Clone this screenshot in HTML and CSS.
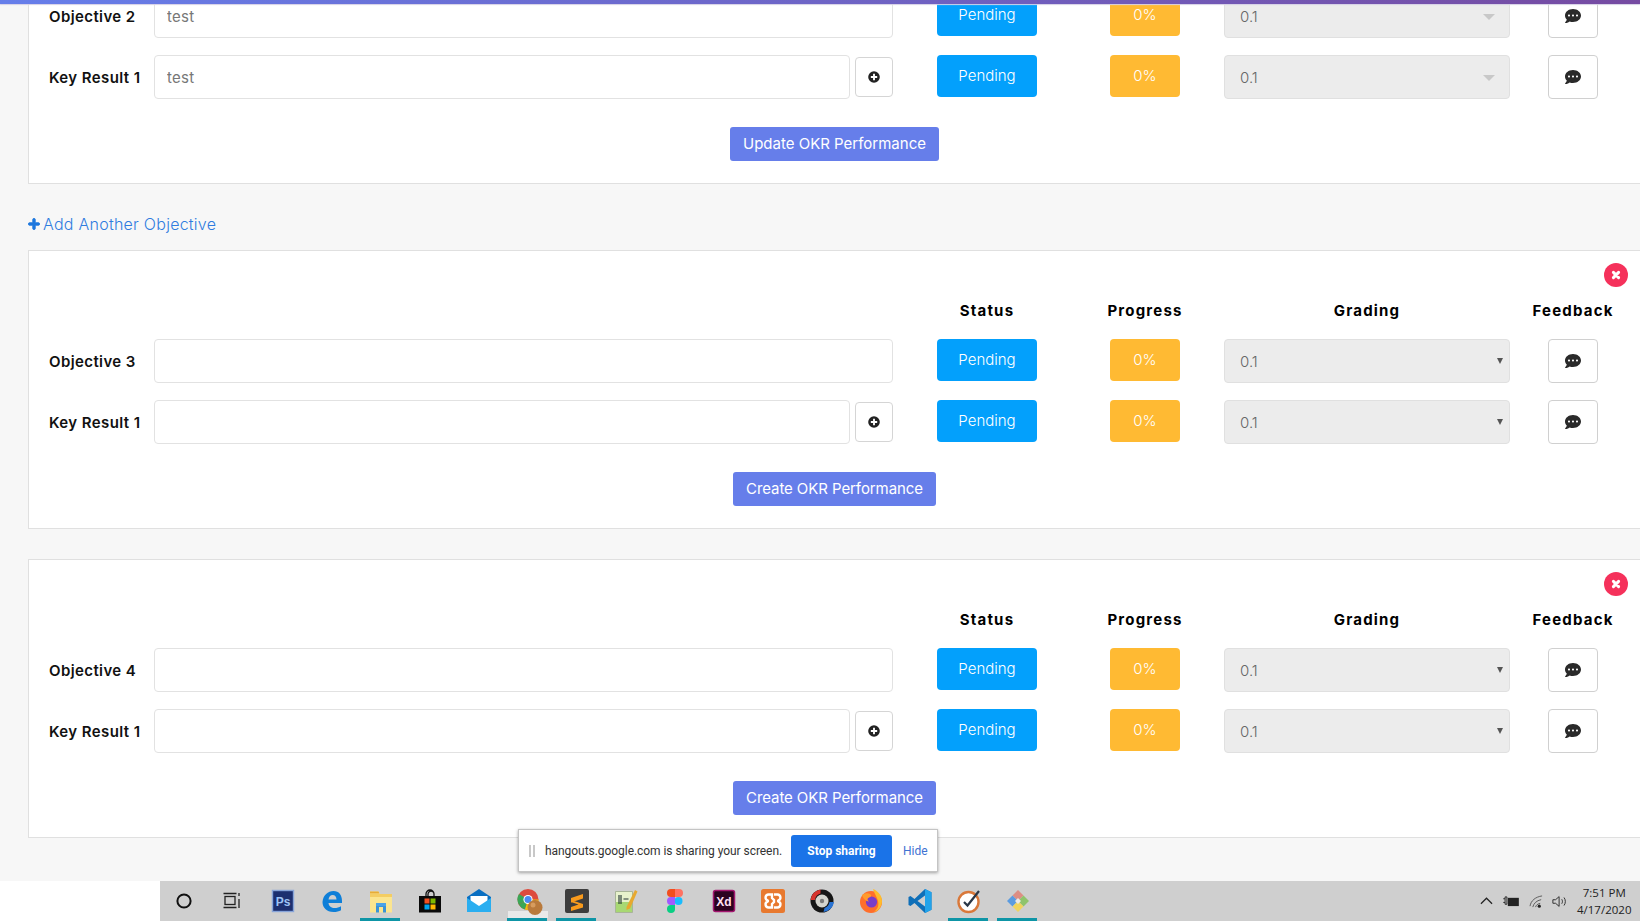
FILE: index.html
```html
<!DOCTYPE html>
<html lang="en">
<head>
<meta charset="utf-8">
<title>OKR Performance</title>
<link rel="stylesheet" href="styles.css">
</head>
<body>
<svg class="sprites" width="0" height="0" aria-hidden="true">
  <symbol id="i-dots" viewBox="0 0 512 512"><path d="M256 32C114.6 32 0 125.1 0 240c0 49.6 21.4 95 57 130.7C44.5 421.1 2.7 466 2.2 466.5c-2.2 2.3-2.8 5.7-1.5 8.7S4.8 480 8 480c66.3 0 116-31.8 140.6-51.4 32.7 12.3 69 19.4 107.4 19.4 141.4 0 256-93.1 256-208S397.4 32 256 32zM128 272c-17.7 0-32-14.3-32-32s14.3-32 32-32 32 14.3 32 32-14.3 32-32 32zm128 0c-17.7 0-32-14.3-32-32s14.3-32 32-32 32 14.3 32 32-14.3 32-32 32zm128 0c-17.7 0-32-14.3-32-32s14.3-32 32-32 32 14.3 32 32-14.3 32-32 32z"/></symbol>
  <symbol id="i-plus-circle" viewBox="0 0 512 512"><path fill-rule="evenodd" d="M256 8a248 248 0 1 0 0 496 248 248 0 0 0 0-496zM392 284c0 7-5 12-12 12h-84v84c0 7-5 12-12 12h-56c-7 0-12-5-12-12v-84h-84c-7 0-12-5-12-12v-56c0-7 5-12 12-12h84v-84c0-7 5-12 12-12h56c7 0 12 5 12 12v84h84c7 0 12 5 12 12z"/></symbol>
  <symbol id="i-plus" viewBox="-20 0 488 512"><path d="M416 208H272V64c0-18-14-32-32-32h-32c-18 0-32 14-32 32v144H32c-18 0-32 14-32 32v32c0 18 14 32 32 32h144v144c0 18 14 32 32 32h32c18 0 32-14 32-32V304h144c18 0 32-14 32-32v-32c0-18-14-32-32-32z"/></symbol>
  <symbol id="i-times" viewBox="0 0 24 24"><path d="M9.400 9.400l5.200 5.200M14.600 9.400l-5.200 5.200" stroke="#fff" stroke-width="3" stroke-linecap="round" fill="none"/></symbol>
</svg>

<div class="screen">
  <div class="topbar"></div>

  <main class="page">
    <section class="card card-first">
      <div class="row">
        <label class="row-label">Objective 2</label>
        <div class="field"><input class="text-input" type="text" value="test"></div>
        <div class="cell"><button class="pill pill-status">Pending</button></div>
        <div class="cell"><button class="pill pill-progress">0%</button></div>
        <div class="cell"><div class="grade grade-locked">0.1</div></div>
        <div class="cell"><button class="square"><svg class="icon-dots"><use href="#i-dots"/></svg></button></div>
      </div>
      <div class="row">
        <label class="row-label">Key Result 1</label>
        <div class="field"><input class="text-input" type="text" value="test"><button class="add"><svg class="icon-add"><use href="#i-plus-circle"/></svg></button></div>
        <div class="cell"><button class="pill pill-status">Pending</button></div>
        <div class="cell"><button class="pill pill-progress">0%</button></div>
        <div class="cell"><div class="grade grade-locked">0.1</div></div>
        <div class="cell"><button class="square"><svg class="icon-dots"><use href="#i-dots"/></svg></button></div>
      </div>
      <div class="actions"><button class="submit">Update OKR Performance</button></div>
    </section>

    <a class="add-link"><svg class="icon-plus"><use href="#i-plus"/></svg>Add Another Objective</a>

    <section class="card">
      <button class="remove"><svg class="icon-times"><use href="#i-times"/></svg></button>
      <div class="row row-head">
        <span></span><span></span>
        <div class="cell">Status</div><div class="cell">Progress</div><div class="cell">Grading</div><div class="cell">Feedback</div>
      </div>
      <div class="row">
        <label class="row-label">Objective 3</label>
        <div class="field"><input class="text-input" type="text"></div>
        <div class="cell"><button class="pill pill-status">Pending</button></div>
        <div class="cell"><button class="pill pill-progress">0%</button></div>
        <div class="cell"><div class="grade">0.1</div></div>
        <div class="cell"><button class="square"><svg class="icon-dots"><use href="#i-dots"/></svg></button></div>
      </div>
      <div class="row">
        <label class="row-label">Key Result 1</label>
        <div class="field"><input class="text-input" type="text"><button class="add"><svg class="icon-add"><use href="#i-plus-circle"/></svg></button></div>
        <div class="cell"><button class="pill pill-status">Pending</button></div>
        <div class="cell"><button class="pill pill-progress">0%</button></div>
        <div class="cell"><div class="grade">0.1</div></div>
        <div class="cell"><button class="square"><svg class="icon-dots"><use href="#i-dots"/></svg></button></div>
      </div>
      <div class="actions"><button class="submit submit-create">Create OKR Performance</button></div>
    </section>

    <section class="card">
      <button class="remove"><svg class="icon-times"><use href="#i-times"/></svg></button>
      <div class="row row-head">
        <span></span><span></span>
        <div class="cell">Status</div><div class="cell">Progress</div><div class="cell">Grading</div><div class="cell">Feedback</div>
      </div>
      <div class="row">
        <label class="row-label">Objective 4</label>
        <div class="field"><input class="text-input" type="text"></div>
        <div class="cell"><button class="pill pill-status">Pending</button></div>
        <div class="cell"><button class="pill pill-progress">0%</button></div>
        <div class="cell"><div class="grade">0.1</div></div>
        <div class="cell"><button class="square"><svg class="icon-dots"><use href="#i-dots"/></svg></button></div>
      </div>
      <div class="row">
        <label class="row-label">Key Result 1</label>
        <div class="field"><input class="text-input" type="text"><button class="add"><svg class="icon-add"><use href="#i-plus-circle"/></svg></button></div>
        <div class="cell"><button class="pill pill-status">Pending</button></div>
        <div class="cell"><button class="pill pill-progress">0%</button></div>
        <div class="cell"><div class="grade">0.1</div></div>
        <div class="cell"><button class="square"><svg class="icon-dots"><use href="#i-dots"/></svg></button></div>
      </div>
      <div class="actions"><button class="submit submit-create">Create OKR Performance</button></div>
    </section>
  </main>

  <div class="share-bar">
    <span class="share-grip"></span>
    <span class="share-text">hangouts.google.com is sharing your screen.</span>
    <button class="share-stop">Stop sharing</button>
    <a class="share-hide">Hide</a>
  </div>

  <footer class="taskbar">
    <div class="search-box"></div>
    <div class="tb-item tb-cortana"><svg viewBox="0 0 24 24"><circle cx="12" cy="12" r="6.600" fill="none" stroke="#111" stroke-width="2"/></svg></div>
    <div class="tb-item tb-view"><svg viewBox="0 0 24 24"><g fill="none" stroke="#222" stroke-width="1.300"><rect x="4" y="7.500" width="10" height="8"/><path d="M2.500 4.500h13M2.500 18.500h13M18 4v3M18 10v9"/></g></svg></div>
    <div class="tb-item"><svg viewBox="0 0 24 24"><rect x="1.500" y="1.500" width="21" height="21" fill="#1c2f70" stroke="#87a4d9" stroke-width="1.400"/><text x="12" y="16.500" class="svg-label svg-ps">Ps</text></svg></div>
    <div class="tb-item"><svg viewBox="0 0 24 24"><path d="M2.500 13C3 6 8 2 13.500 2c5.500 0 8.500 4 8.500 10v2H8.500c.3 3.500 3 5 6 5 2.500 0 4.700-.7 6.500-1.800v4c-2 1-4.500 1.800-7.500 1.800-7 0-11-4.500-11-10zM8.500 10.500h8c0-2.500-1.500-4.500-3.800-4.500-2.500 0-3.800 2-4.200 4.500z" fill="#0f7fd8"/></svg></div>
    <div class="tb-item tb-active"><svg viewBox="0 0 24 24"><path d="M1 2.500h8.500l2 3H23v18H1z" fill="#fbe58f"/><path d="M1 2.500h8.500l1 2H1z" fill="#e7ac36"/><path d="M1 5h22v3H1z" fill="#f4cd62"/><path d="M7 14h10v9.500h-3V18h-4v5.500H7z" fill="#3b93d8"/><path d="M7 14h10v3H7z" fill="#4aa3e8"/></svg></div>
    <div class="tb-item"><svg viewBox="0 0 24 24"><path d="M8 8V5a4 4 0 0 1 8 0v3M10 8V5a3 3 0 0 1 5-2" fill="none" stroke="#111" stroke-width="1.300"/><rect x="1" y="7" width="22" height="16.500" fill="#0a0a0a"/><rect x="6.500" y="9.500" width="5" height="5" fill="#f25022"/><rect x="12.500" y="9.500" width="5" height="5" fill="#7fba00"/><rect x="6.500" y="15.500" width="5" height="5" fill="#00a4ef"/><rect x="12.500" y="15.500" width="5" height="5" fill="#ffb900"/></svg></div>
    <div class="tb-item"><svg viewBox="0 0 24 24"><path d="M0 8L12 0l12 8v15H0z" fill="#0a6fc2"/><path d="M3.500 7h17v6.500L12 19l-8.500-5.500z" fill="#fff"/><path d="M0 23V9l12 8 12-8v14z" fill="#2aaef0"/></svg></div>
    <div class="tb-item tb-chrome"><svg viewBox="-1 0 24 24"><circle cx="11" cy="10.500" r="10.500" fill="#dd4b3e"/><path d="M11 10.500L1.800 15.500A10.500 10.500 0 0 1 2 5z" fill="#3aa757"/><path d="M11 10.500l-3 10.100A10.500 10.500 0 0 1 1.800 15.500z" fill="#3aa757"/><path d="M11 10.500h10.500a10.500 10.500 0 0 1-13.500 10.100z" fill="#f4c20d"/><circle cx="11" cy="10.500" r="4.600" fill="#fff"/><circle cx="11" cy="10.500" r="3.500" fill="#4a8af4"/><circle cx="18" cy="18.500" r="7.500" fill="#b97a3c"/><circle cx="16" cy="16" r="2.500" fill="#d79c5e"/></svg></div>
    <div class="tb-item tb-active"><svg viewBox="0 0 24 24"><rect width="24" height="24" rx="2" fill="#3d3d3d"/><path d="M6 9l12-4v4.500L6 13.500zM6 11l12 4v3.500L6 22v-4l7.500-2.500L6 13z" fill="#f89a1c"/></svg></div>
    <div class="tb-item"><svg viewBox="0 0 24 24"><path d="M1.500 2.500h17v21h-17z" fill="#e7f2cc" stroke="#9aa98a" stroke-width=".8"/><path d="M2 13h16v10H2z" fill="#a8d873"/><path d="M5 6v9M7 6v9M9.500 10h5" stroke="#233" stroke-width="1.100"/><path d="M12.500 18L21 1l2.500 1.500L16 19.500 12.500 21z" fill="#e7a92f"/></svg></div>
    <div class="tb-item"><svg viewBox="0 0 24 24"><circle cx="15.500" cy="12" r="4" fill="#19bcfe"/><path d="M8 24a4 4 0 0 1 0-8h4v4a4 4 0 0 1-4 4" fill="#09cf83"/><path d="M8 16a4 4 0 0 1 0-8h4v8z" fill="#a259ff"/><path d="M12 0h4a4 4 0 0 1 0 8h-4z" fill="#ff7262"/><path d="M8 0h4v8H8a4 4 0 0 1 0-8" fill="#f24e1e"/></svg></div>
    <div class="tb-item"><svg viewBox="0 0 24 24"><rect x="1.500" y="1.500" width="21" height="21" rx="2" fill="#2b0320" stroke="#a3176f" stroke-width="1.500"/><text x="12" y="16.500" class="svg-label svg-xd">Xd</text></svg></div>
    <div class="tb-item"><svg viewBox="0 0 24 24"><rect width="24" height="24" rx="2.500" fill="#e8792f"/><path d="M11 5.500H7.500a3 3 0 0 0-1 5.800c.6.300.6 1.100 0 1.400a3 3 0 0 0 1 5.800H11V15l2-2v-2l-2-2zM13 5.500h3.500a3 3 0 0 1 1 5.800c-.6.300-.6 1.100 0 1.400a3 3 0 0 1-1 5.800H13" fill="none" stroke="#fff" stroke-width="2.400"/></svg></div>
    <div class="tb-item"><svg viewBox="0 0 24 24"><circle cx="12" cy="12" r="11.500" fill="#161616"/><path d="M.5 11a11.500 11.500 0 0 1 10-10.500v4A7.500 7.500 0 0 0 5 11z" fill="#d8332c"/><path d="M24 13a11.500 11.500 0 0 1-10.500 10l1-4a7.500 7.500 0 0 0 5-6z" fill="#2a74d4"/><circle cx="12" cy="12" r="6.500" fill="#d4d4ce"/><circle cx="12" cy="12" r="2.200" fill="#7a7a7a"/></svg></div>
    <div class="tb-item"><svg viewBox="0 0 24 24"><circle cx="12" cy="13" r="11" fill="#ff6f2c"/><path d="M14 0c5 2 9 6.500 9 12 0 6-4 10-8 11 4-3 5-7 4-11-1-4-4-8-5-12z" fill="#ffbc2c"/><circle cx="12.500" cy="13" r="5.600" fill="#7a3ec8"/><path d="M3 6c3-2 6-2 8-1 2 1 1 3-1 3.500-2 .5-2 2.500 0 4-3 0-6-3-7-6.500z" fill="#ff9b2d"/></svg></div>
    <div class="tb-item"><svg viewBox="0 0 24 24"><path d="M17 0l6.500 3.200v17.600L17 24 6.500 14 2.500 17 .5 16V8l2-1 4 3z" fill="#0f6fb8"/><path d="M17 0l6.500 3.200v17.600L17 24z" fill="#22a3ea"/><path d="M17 6.500L9.500 12l7.500 5.500z" fill="#cfcfcf"/></svg></div>
    <div class="tb-item tb-active"><svg viewBox="0 0 24 24"><circle cx="11.500" cy="13" r="10" fill="#fff" stroke="#d9783a" stroke-width="2.400"/><path d="M7 13l3.500 3.500L22 2" fill="none" stroke="#2a3646" stroke-width="2.200"/></svg></div>
    <div class="tb-item tb-active"><svg viewBox="0 0 24 24"><path d="M12 1l5.500 5.500L12 12 6.500 6.500z" fill="#dd8e84"/><path d="M17.500 6.500L23 12l-5.500 5.500L12 12z" fill="#8fc46c"/><path d="M6.500 6.500L12 12l-5.500 5.500L1 12z" fill="#5b9be0"/><path d="M12 12l5.500 5.500L12 23l-5.500-5.500z" fill="#f0d45e"/><path d="M12 9L15 12 12 15 9 12z" fill="#e9e9e9"/></svg></div>

    <div class="tray">
      <svg class="tray-chevron" viewBox="0 0 14 8"><path d="M1 7l6-6 6 6" fill="none" stroke="#222" stroke-width="1.300"/></svg>
      <svg class="tray-battery" viewBox="0 0 18 12"><path d="M0 3h2M0 7h2M2 1v8h2V1z" stroke="#222" fill="none"/><rect x="5" y="2" width="12" height="9" fill="#222"/></svg>
      <svg class="tray-wifi" viewBox="0 0 16 14"><g fill="none" stroke="#555" stroke-width="1"><path d="M1 12C2 6 7 2 14 1M4 13c1-4 4-7 9-8M7 13c.6-2 2-3.500 5-4"/></g><circle cx="11" cy="12" r="1.700" fill="#222"/></svg>
      <svg class="tray-volume" viewBox="0 0 18 14"><g fill="none" stroke="#222" stroke-width="1"><path d="M1 5v4h3l4 3.500v-11L4 5zM11 4.500c1 1.500 1 3.500 0 5M13.500 2.500c2 2.500 2 6.500 0 9"/></g></svg>
      <div class="clock"><span>7:51 PM</span><span>4/17/2020</span></div>
    </div>
  </footer>
</div>
</body>
</html>
```

FILE: styles.css
```css
* { box-sizing: border-box; }

html, body {
  margin: 0;
  height: 100%;
  overflow: hidden;
}

body {
  font-family: Inter, "Liberation Sans", sans-serif;
  color: #111;
  background: #f7f7f7;
}

.sprites { display: block; height: 0; }

.screen {
  position: relative;
  display: flex;
  flex-direction: column;
  height: 921px;
  overflow: hidden;
}

.topbar {
  flex: none;
  position: relative;
  z-index: 2;
  height: 4px;
  background: linear-gradient(90deg, #667eea, #764ba2);
  box-shadow: 0 1px 1px #d5d0e6;
}

.page {
  flex: 1;
  min-height: 0;
  overflow: hidden;
  padding-left: 28px;
}

.card {
  position: relative;
  width: 1613px;
  margin-bottom: 30px;
  padding: 50px 0 22px 20px;
  background: #fff;
  border: 1px solid #e0e0e0;
}

.card-first {
  margin-top: -40px;
  margin-bottom: 0;
  padding-top: 30px;
  border-top: 0;
}

.row {
  display: grid;
  grid-template-columns: 105px 739px 188px 128px 316px 96px;
  margin-bottom: 17px;
}

.row-head {
  height: 20px;
  margin-bottom: 18px;
  font-size: 15px;
  font-weight: 700;
  letter-spacing: 1.2px;
  line-height: 20px;
  color: #000;
}

.cell {
  display: flex;
  justify-content: center;
  align-items: flex-start;
}

.row-label {
  align-self: center;
  font-size: 15px;
  font-weight: 600;
  letter-spacing: .4px;
  color: #111;
  white-space: nowrap;
}

.field {
  display: flex;
  align-items: center;
  gap: 5px;
}

.text-input {
  flex: 1;
  min-width: 0;
  height: 44px;
  padding: 0 12px;
  font: 400 15px Inter, "Liberation Sans", sans-serif;
  letter-spacing: .3px;
  color: #777;
  background: #fff;
  border: 1px solid #e2e2e2;
  border-radius: 4px;
}

.add {
  flex: none;
  display: flex;
  align-items: center;
  justify-content: center;
  width: 38px;
  height: 40px;
  padding: 0;
  background: #fff;
  border: 1px solid #d5d5d5;
  border-radius: 4px;
}

.icon-add { width: 12px; height: 12px; fill: #222; }

.pill {
  height: 42px;
  padding: 0 0 2px;
  font: 300 15px Inter, "Liberation Sans", sans-serif;
  color: #fff;
  border: 0;
  border-radius: 4px;
}

.pill-status { width: 100px; background: #03a0fc; }
.pill-progress { width: 70px; background: #ffba33; }

.grade {
  position: relative;
  width: 286px;
  height: 44px;
  padding-left: 15px;
  font-size: 15px;
  font-weight: 300;
  line-height: 44px;
  color: #666;
  background: #ececec;
  border: 1px solid #e0e0e0;
  border-radius: 4px;
}

.grade::after {
  content: "";
  position: absolute;
  right: 6px;
  top: 18px;
  border: 3.5px solid transparent;
  border-top: 6px solid #555;
  border-bottom: 0;
}

.grade-locked::after {
  right: 14px;
  top: 19px;
  border-width: 6px 6px 0;
  border-style: solid;
  border-color: #c8c8c8 transparent transparent;
}

.square {
  display: flex;
  align-items: center;
  justify-content: center;
  width: 50px;
  height: 44px;
  padding: 0;
  background: #fff;
  border: 1px solid #d0d0d0;
  border-radius: 4px;
}

.icon-dots { width: 16px; height: 16px; fill: #2a2a2a; }

.actions {
  display: flex;
  justify-content: center;
  margin-top: 28px;
  padding-right: 20px;
}

.submit {
  height: 34px;
  padding: 0 13px 2px;
  font: 400 15px Inter, "Liberation Sans", sans-serif;
  color: #fff;
  background: #667eea;
  border: 0;
  border-radius: 3px;
}

.submit-create { letter-spacing: -.08px; }

.add-link {
  display: flex;
  align-items: center;
  height: 24px;
  margin: 28px 0 14px;
  font-size: 16px;
  font-weight: 300;
  letter-spacing: .25px;
  color: #2f7cdf;
}

.icon-plus {
  width: 12px;
  height: 14px;
  margin-right: 3px;
  fill: #1f78de;
  stroke: #1f78de;
  stroke-width: 40px;
}

.remove {
  position: absolute;
  top: 12px;
  right: 12px;
  display: flex;
  align-items: center;
  justify-content: center;
  width: 24px;
  height: 24px;
  padding: 0;
  background: #f5315b;
  border: 0;
  border-radius: 50%;
}

.icon-times { width: 24px; height: 24px; }

.share-bar {
  position: absolute;
  left: 518px;
  top: 829px;
  z-index: 3;
  display: flex;
  align-items: center;
  width: 420px;
  height: 43px;
  padding-left: 10px;
  background: #fff;
  border: 1px solid #c4c4c4;
  box-shadow: 0 1px 3px rgba(0, 0, 0, .35);
  font-family: Roboto, "Liberation Sans", sans-serif;
}

.share-grip {
  width: 6px;
  height: 12px;
  margin-right: 10px;
  border-left: 2px solid #c8c8c8;
  border-right: 2px solid #c8c8c8;
}

.share-text {
  width: 246px;
  font-size: 12px;
  letter-spacing: -.05px;
  color: #333;
  white-space: nowrap;
}

.share-stop {
  width: 101px;
  height: 32px;
  padding: 0;
  font: 700 12px Roboto, "Liberation Sans", sans-serif;
  color: #fff;
  background: #1a73e8;
  border: 0;
  border-radius: 3px;
}

.share-hide {
  margin-left: 11px;
  font-size: 12px;
  color: #3f72d2;
}

.taskbar {
  flex: none;
  display: flex;
  align-items: center;
  height: 40px;
  background: #cfcfcf;
}

.search-box {
  align-self: stretch;
  flex: none;
  width: 160px;
  background: #fff;
}

.tb-item {
  position: relative;
  flex: none;
  display: flex;
  align-items: center;
  justify-content: center;
  align-self: stretch;
  width: 49px;
  padding-bottom: 1px;
}

.tb-item svg { width: 24px; height: 24px; overflow: visible; }

.tb-cortana { width: 48px; }
.tb-view { width: 50px; }

.svg-label {
  font-family: "Liberation Sans", sans-serif;
  font-size: 12px;
  font-weight: 700;
  text-anchor: middle;
}

.svg-ps { fill: #9cc3f5; }
.svg-xd { fill: #ffe0f2; }

.tb-active::after,
.tb-chrome::after {
  content: "";
  position: absolute;
  left: 4px;
  right: 5px;
  bottom: 0;
  height: 3px;
  background: #0e95a6;
}

.tb-chrome::before {
  content: "";
  position: absolute;
  left: 5px;
  right: 4px;
  bottom: 3px;
  height: 7px;
  background: #e9e9e9;
}

.tb-chrome svg { position: relative; z-index: 1; }

.tray {
  flex: 1;
  display: flex;
  align-items: center;
  height: 100%;
  padding-left: 438px;
}

.tray-chevron { width: 13px; height: 8px; margin-right: 10px; }
.tray-battery { width: 17px; height: 11px; margin-right: 9px; }
.tray-wifi { width: 15px; height: 13px; margin-right: 8px; }
.tray-volume { width: 16px; height: 13px; margin-right: 9px; }

.clock {
  display: flex;
  flex-direction: column;
  align-items: center;
  gap: 1px;
  font: 400 11.5px/16px "Open Sans", "Liberation Sans", sans-serif;
  color: #222;
}
```
